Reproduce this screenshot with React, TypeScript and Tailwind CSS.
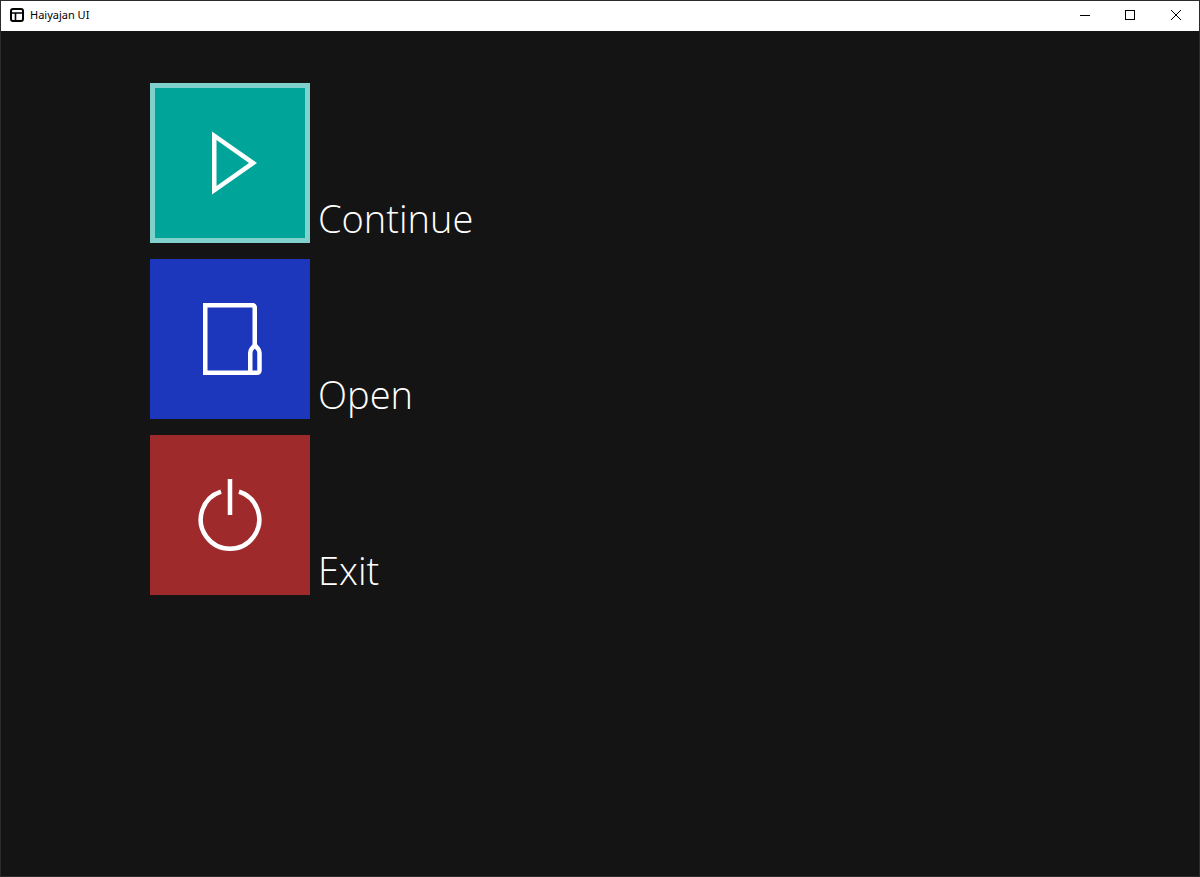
import type { ReactNode } from "react";

function AppIcon() {
  return (
    <svg className="size-4" viewBox="0 0 16 16" fill="none" stroke="#000" strokeWidth="2" aria-hidden="true">
      <rect x="2" y="2" width="12" height="12" rx="2" />
      <path d="M2 6H14M6.5 6V14" strokeWidth="1.6" />
    </svg>
  );
}

function PlayIcon() {
  return (
    <path
      fill="#fff"
      fillRule="evenodd"
      d="M62 48.5L107 80L62 111.5ZM66.5 57V103L99 80Z"
    />
  );
}

function OpenIcon() {
  return (
    <path
      fill="none"
      stroke="#fff"
      strokeWidth="4.5"
      d="M104.75 86V48.25a2 2 0 0 0-2-2H55.25V113.75H107.25a2.25 2.25 0 0 0 2.25-2.25V94Q109.5 92 108.3 90.2L104.75 86L101.4 90.2Q100.25 92 100.25 94V113.75"
    />
  );
}

function PowerIcon() {
  return (
    <path
      fill="none"
      stroke="#fff"
      strokeWidth="4.5"
      d="M80 44V80M71 56.6A29.25 29.25 0 1 0 89 56.6"
    />
  );
}

type Item = { label: string; tile: string; icon: ReactNode };

const items: Item[] = [
  { label: "Continue", tile: "bg-[#00a499] border-[5px] border-[#80d1cc]", icon: <PlayIcon /> },
  { label: "Open", tile: "bg-[#1c37bc]", icon: <OpenIcon /> },
  { label: "Exit", tile: "bg-[#9f2a2c]", icon: <PowerIcon /> },
];

function MenuButton({ label, tile, icon }: Item) {
  return (
    <button type="button" className="flex items-end gap-2 text-left">
      <span className={`flex size-40 items-center justify-center ${tile}`}>
        <svg className="size-40 shrink-0" viewBox="0 0 160 160" aria-hidden="true">
          {icon}
        </svg>
      </span>
      <span className="text-[38px] leading-[50px] font-[340] text-white">{label}</span>
    </button>
  );
}

export default function App() {
  return (
    <div className="flex min-h-screen flex-col border border-[#2b2b2b] bg-[#141414] font-['Open_Sans','Noto_Sans',sans-serif]">
      <header className="flex h-[30px] items-center bg-white pb-0.5 pl-2 text-black">
        <AppIcon />
        <h1 className="ml-[5px] flex-1 font-['Noto_Sans',sans-serif] text-[11px] leading-4">Haiyajan UI</h1>
        <button type="button" aria-label="Minimize" className="flex h-full w-[46px] items-center justify-center">
          <svg className="size-3" viewBox="0 0 12 12" fill="none" stroke="#000" aria-hidden="true">
            <path d="M2 6.5H12" />
          </svg>
        </button>
        <button type="button" aria-label="Maximize" className="flex h-full w-[46px] items-center justify-center">
          <svg className="size-3" viewBox="0 0 12 12" fill="none" stroke="#000" aria-hidden="true">
            <rect x="1.5" y="1.5" width="9" height="9" />
          </svg>
        </button>
        <button type="button" aria-label="Close" className="flex h-full w-[46px] items-center justify-center">
          <svg className="size-3" viewBox="0 0 12 12" fill="none" stroke="#000" aria-hidden="true">
            <path d="M1 1L11 11M11 1L1 11" />
          </svg>
        </button>
      </header>
      <main className="flex flex-1 flex-col items-start gap-4 px-[149px] pt-[52px]">
        {items.map((item) => (
          <MenuButton key={item.label} {...item} />
        ))}
      </main>
    </div>
  );
}
